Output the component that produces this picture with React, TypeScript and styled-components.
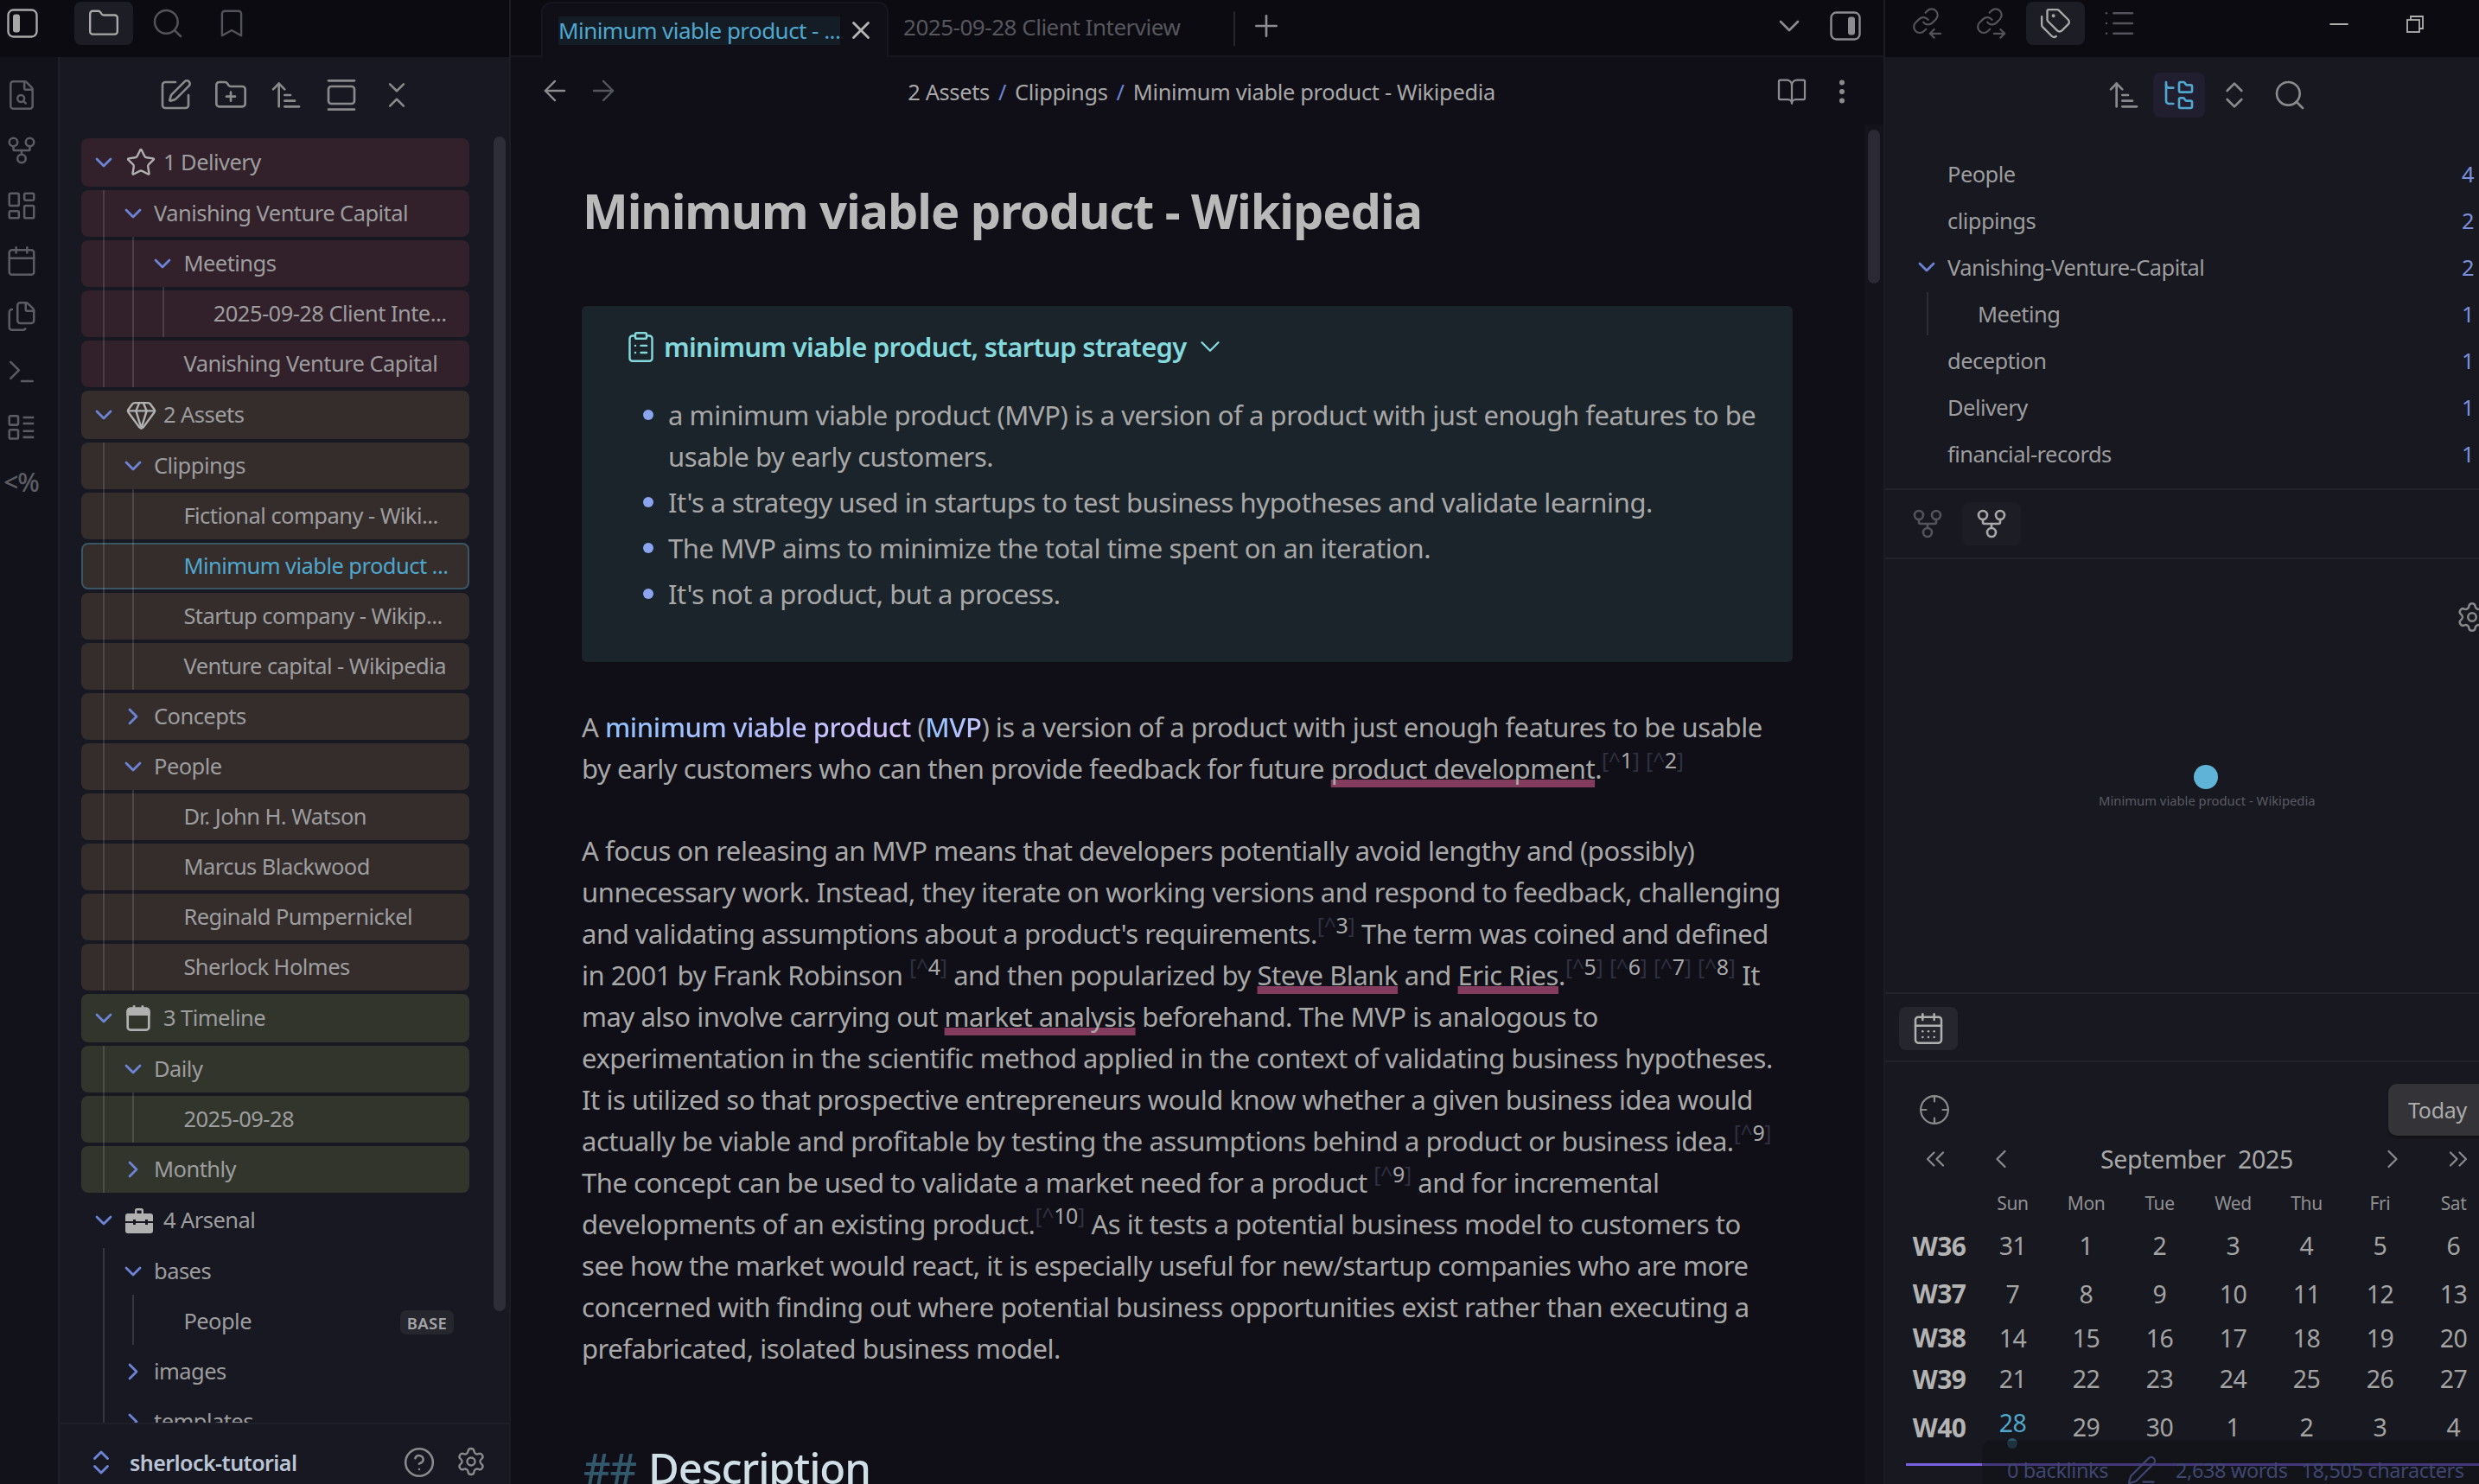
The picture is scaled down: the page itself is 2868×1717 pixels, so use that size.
import React from "react";
import styled, { createGlobalStyle } from "styled-components";
import {
  ArrowLeft,
  ArrowRight,
  ArrowUpNarrowWide,
  BookOpen,
  Bookmark,
  Calendar,
  CalendarDays,
  ChevronDown,
  ChevronLeft,
  ChevronRight,
  ChevronsDownUp,
  ChevronsLeft,
  ChevronsRight,
  ChevronsUpDown,
  CircleHelp,
  ClipboardList,
  Crosshair,
  EllipsisVertical,
  FileSearch,
  Files,
  Folder,
  FolderPlus,
  FolderTree,
  GalleryVertical,
  Gem,
  GitFork,
  LayoutDashboard,
  List,
  Minus,
  PenLine,
  Plus,
  Search,
  Settings,
  SquarePen,
  Star,
  Tags,
  Terminal,
  X,
} from "lucide-react";

const FONT = `"Noto Sans", "Open Sans", "Liberation Sans", sans-serif`;
const STROKE = 1.6;

const GlobalStyle = createGlobalStyle`
  html, body {
    margin: 0;
    padding: 0;
    background: #100f18;
    overflow: hidden;
  }
  * { box-sizing: border-box; }
  body { font-family: ${FONT}; }
`;

const Window = styled.div`
  width: 2868px;
  height: 1717px;
  display: grid;
  grid-template-columns: 591px 1590px 687px;
  overflow: hidden;
  position: relative;
  color: #a8a8a8;
`;

// left side
const LeftPane = styled.div`
  display: flex;
  flex-direction: column;
  height: 1717px;
  border-right: 2px solid #1c1c25;
  background: #181822;
`;

const TopBar = styled.div`
  height: 66px;
  flex: none;
  display: flex;
  align-items: center;
  background: #0c0b12;
`;

const LeftTopBar = styled(TopBar)`
  padding-left: 8px;
  align-items: flex-start;
  padding-top: 2px;
`;

const ToggleSlot = styled.div`
  width: 78px;
  height: 50px;
  display: flex;
  align-items: center;
  color: #a8a8a8;
`;

const TabIcon = styled.div<{ $active?: boolean; $width?: number }>`
  width: ${(p) => p.$width || 68}px;
  height: 50px;
  margin-right: 6px;
  border-radius: 8px;
  display: flex;
  align-items: center;
  justify-content: center;
  background: ${(p) => (p.$active ? "#1d1d25" : "transparent")};
  color: ${(p) => (p.$active ? "#a8a8a8" : "#53535b")};
`;

const LeftBody = styled.div`
  flex: 1;
  min-height: 0;
  display: flex;
`;

const Ribbon = styled.div`
  width: 69px;
  flex: none;
  border-right: 2px solid #1f1f29;
  background: #12121b;
  display: flex;
  flex-direction: column;
  align-items: center;
  padding: 25px 18px 0 0;
  gap: 26px;
  color: #5c5c65;
`;

const RibbonText = styled.div`
  font-size: 30px;
  font-weight: 500;
  line-height: 38px;
  letter-spacing: -1px;
`;

const TreePanel = styled.div`
  flex: 1;
  min-width: 0;
  display: flex;
  flex-direction: column;
  position: relative;
`;

const PaneToolbar = styled.div`
  height: 88px;
  flex: none;
  display: flex;
  justify-content: center;
  align-items: center;
  padding-left: 3px;
  color: #8a8a8d;
`;

const ToolButton = styled.div`
  width: 64px;
  height: 52px;
  display: flex;
  align-items: center;
  justify-content: center;
`;

const TreeList = styled.div`
  flex: 1;
  min-height: 0;
  overflow: hidden;
  display: flex;
  flex-direction: column;
  gap: 4px;
  padding: 6px 0 0 25px;
`;

const TONES: Record<string, string> = {
  red: "#32212a",
  brown: "#352d2c",
  green: "#32352c",
  none: "transparent",
};

const Row = styled.div<{ $tone: string; $top?: boolean; $active?: boolean; $level: number }>`
  position: relative;
  flex: none;
  width: 449px;
  height: ${(p) => (p.$top ? 56 : 54)}px;
  border-radius: 8px;
  background: ${(p) => TONES[p.$tone]};
  border: 2px solid ${(p) => (p.$active ? "#3b5564" : "transparent")};
  display: flex;
  align-items: center;
  padding-left: ${(p) => (p.$top ? 93 : 82 + 34.4 * (p.$level - 1))}px;
  padding-bottom: 2px;
  font-size: 25.5px;
  letter-spacing: -0.55px;
  white-space: nowrap;
  color: ${(p) => (p.$active ? "#4fa7cd" : "#9d9d9f")};
`;

const Guide = styled.span<{ $x: number; $first?: boolean }>`
  position: absolute;
  left: ${(p) => p.$x}px;
  top: ${(p) => (p.$first ? -2 : -6)}px;
  bottom: -2px;
  width: 2px;
  background: rgba(255, 255, 255, 0.13);
`;

const Caret = styled.span<{ $x: number }>`
  position: absolute;
  left: ${(p) => p.$x}px;
  top: 50%;
  transform: translateY(-50%);
  display: flex;
  color: #6d84d6;
`;

const RootIcon = styled.span`
  position: absolute;
  left: 49px;
  top: 50%;
  transform: translateY(-50%);
  display: flex;
  color: #b0b0b0;
`;

const BaseTag = styled.span`
  position: absolute;
  right: 16px;
  top: 12px;
  height: 28px;
  width: 62px;
  border-radius: 7px;
  background: #26262e;
  color: #a4a4a6;
  font-size: 18.5px;
  font-weight: 600;
  letter-spacing: 0.4px;
  display: flex;
  align-items: center;
  justify-content: center;
`;

const TreeScroll = styled.div`
  position: absolute;
  left: 502px;
  top: 92px;
  width: 14px;
  height: 1359px;
  border-radius: 7px;
  background: #2e2e39;
`;

const TreeFooter = styled.div`
  height: 71px;
  flex: none;
  display: flex;
  align-items: center;
  border-top: 2px solid #1f1f29;
  background: #181822;
  padding: 18px 0 0 30px;
  color: #8a8a8d;
`;

const VaultCaret = styled.span`
  display: flex;
  color: #6d84d6;
  width: 51px;
`;

const VaultName = styled.div`
  flex: 1;
  font-size: 25px;
  font-weight: 600;
  letter-spacing: -0.55px;
  color: #bac4d4;
`;

const FooterButton = styled.div`
  width: 60px;
  display: flex;
  justify-content: center;
`;

const FooterEnd = styled.div`
  display: flex;
  padding-right: 14px;
`;

// center
const CenterPane = styled.div`
  display: flex;
  flex-direction: column;
  height: 1717px;
  position: relative;
  background: #100f18;
  border-right: 2px solid #1c1c25;
  overflow: hidden;
`;

const TabStrip = styled(TopBar)`
  position: relative;
  border-bottom: 2px solid #15161e;
`;

const ActiveTab = styled.div`
  position: absolute;
  left: 35px;
  top: 2px;
  width: 402px;
  height: 64px;
  background: #100f18;
  border-radius: 12px 12px 0 0;
  border: 2px solid #15161e;
  border-bottom: none;
  display: flex;
  align-items: center;
  padding-left: 18px;
  color: #b4b4b4;
`;

const ActiveTitle = styled.div`
  width: 326px;
  height: 33px;
  background: #141c25;
  color: #4fa7cd;
  font-size: 26px;
  line-height: 32px;
  letter-spacing: -0.55px;
  white-space: nowrap;
  margin-right: 7px;
`;

const IdleTab = styled.div`
  position: absolute;
  left: 454px;
  top: 13px;
  font-size: 26px;
  line-height: 36px;
  letter-spacing: -0.48px;
  color: #56565d;
  white-space: nowrap;
`;

const TabDivider = styled.div`
  position: absolute;
  left: 836px;
  top: 13px;
  width: 2px;
  height: 40px;
  background: #26262c;
`;

const TabEnd = styled.div<{ $x: number }>`
  position: absolute;
  left: ${(p) => p.$x}px;
  top: 12px;
  height: 36px;
  display: flex;
  align-items: center;
  color: #8c8c90;
`;

const ViewHeader = styled.div`
  height: 80px;
  flex: none;
  position: relative;
  display: flex;
  align-items: center;
  justify-content: center;
`;

const NavArrows = styled.div`
  position: absolute;
  left: 32px;
  top: 20px;
  display: flex;
  gap: 18px;
  color: #8c8c90;
`;

const NavForward = styled.span`
  display: flex;
  color: #55555c;
`;

const Crumbs = styled.div`
  font-size: 25.4px;
  letter-spacing: -0.32px;
  color: #a8a8a8;
  white-space: nowrap;
  display: flex;
  gap: 10px;
  margin-left: 10px;
`;

const CrumbSlash = styled.span`
  color: #6d84d6;
`;

const ViewActions = styled.div`
  position: absolute;
  left: 1464px;
  top: 22px;
  display: flex;
  gap: 22px;
  color: #8c8c90;
`;

const Content = styled.div`
  flex: 1;
  min-height: 0;
  overflow: hidden;
  padding: 0 0 0 82px;
`;

const Title = styled.h1`
  margin: 62px 0 76px 1px;
  font-size: 56px;
  line-height: 70px;
  font-weight: 700;
  letter-spacing: -1.1px;
  color: #b9b9b9;
  white-space: nowrap;
`;

const CalloutBox = styled.div`
  width: 1401px;
  height: 412px;
  background: #1c242b;
  border-radius: 6px;
  padding: 23px 0 0 49px;
`;

const CalloutTitle = styled.div`
  display: flex;
  align-items: center;
  height: 48px;
  color: #83d9dc;
  font-size: 31px;
  font-weight: 600;
  letter-spacing: -0.72px;
  white-space: nowrap;
  margin-bottom: 31px;
`;

const CalloutIcon = styled.span`
  display: flex;
  margin-right: 7px;
`;

const CalloutCaret = styled.span`
  display: flex;
  margin-left: 8px;
`;

const Bullets = styled.ul`
  list-style: none;
  margin: 0;
  padding: 0;
  display: flex;
  flex-direction: column;
  gap: 5px;
`;

const Bullet = styled.li`
  position: relative;
  padding-left: 51px;
  font-size: 31px;
  line-height: 48px;
  letter-spacing: -0.42px;
  white-space: nowrap;

  &::before {
    content: "";
    position: absolute;
    left: 22px;
    top: 18px;
    width: 12px;
    height: 12px;
    border-radius: 50%;
    background: #8aa4f0;
  }
`;

const Para = styled.p`
  margin: 51px 0 47px;
  font-size: 31px;
  line-height: 48px;
  letter-spacing: -0.46px;
  white-space: nowrap;

  & + & {
    margin-top: 0;
  }
`;

const GradientLink = styled.span`
  background: linear-gradient(90deg, #8dc0ff, #d8c2ff);
  -webkit-background-clip: text;
  background-clip: text;
  color: transparent;
  font-weight: 500;
`;

const PlainGradient = styled(GradientLink)`
  background: linear-gradient(90deg, #8dc0ff, #c6c6ff);
  -webkit-background-clip: text;
  background-clip: text;
`;

const WikiLink = styled.span`
  text-decoration: underline #833c5e 9px;
  text-underline-offset: 1px;
  text-decoration-skip-ink: none;
`;

const NoteMark = styled.sup`
  font-size: 25px;
  line-height: 0;
  letter-spacing: -0.4px;
  vertical-align: 12px;
  color: #a8a8a8;
`;

const NoteFaint = styled.span`
  color: #2f3040;
`;

const Heading = styled.h2`
  margin: 79px 0 0 2px;
  font-size: 49px;
  line-height: 70px;
  font-weight: 500;
  letter-spacing: -1.1px;
  color: #d0dfe6;
  white-space: nowrap;
`;

const HeadingHash = styled.span`
  color: #31596b;
  margin-right: 14px;
`;

const ScrollTrack = styled.div`
  position: absolute;
  right: 0;
  top: 144px;
  bottom: 0;
  width: 22px;
  background: #14131c;
`;

const ScrollThumb = styled.div`
  position: absolute;
  left: 4px;
  top: 6px;
  width: 14px;
  height: 178px;
  border-radius: 7px;
  background: #2b2a34;
`;

// right side
const RightPane = styled.div`
  height: 1717px;
  display: flex;
  flex-direction: column;
  background: #181820;
  overflow: hidden;
  position: relative;
`;

const RightTopBar = styled(TopBar)`
  align-items: flex-start;
  padding: 2px 0 0 15px;
  position: relative;
`;

const WindowButton = styled.div<{ $x: number }>`
  position: absolute;
  left: ${(p) => p.$x}px;
  top: 15px;
  height: 26px;
  display: flex;
  align-items: center;
  color: #b0b0b0;
`;

const TagRows = styled.div`
  height: 413px;
  flex: none;
  padding-top: 20px;
  border-bottom: 2px solid #22222b;
`;

const RightToolbar = styled(PaneToolbar)`
  padding-left: 56px;
`;

const SmallTool = styled.div<{ $active?: boolean }>`
  width: 60px;
  height: 52px;
  margin: 0 2px;
  border-radius: 8px;
  display: flex;
  align-items: center;
  justify-content: center;
  background: ${(p) => (p.$active ? "#211e30" : "transparent")};
  color: ${(p) => (p.$active ? "#4fa7cd" : "#8a8a8d")};
`;

const TagRow = styled.div<{ $nested?: boolean }>`
  position: relative;
  height: 54px;
  display: flex;
  align-items: center;
  padding-left: ${(p) => (p.$nested ? 107 : 72)}px;
  padding-right: 6px;
  font-size: 25.5px;
  letter-spacing: -0.55px;
  color: #9d9d9f;
`;

const TagName = styled.span`
  flex: 1;
  white-space: nowrap;
`;

const TagCount = styled.span`
  color: #7a90dc;
`;

const TagCaret = styled.span`
  position: absolute;
  left: 32px;
  top: 11px;
  display: flex;
  color: #6d84d6;
`;

const TagGuide = styled.span`
  position: absolute;
  left: 48px;
  top: 2px;
  bottom: 2px;
  width: 2px;
  background: #2c2c35;
`;

const GraphHeader = styled.div`
  height: 80px;
  flex: none;
  padding: 14px 0 0 15px;
  display: flex;
  border-bottom: 2px solid #22222b;
`;

const GraphPane = styled.div`
  height: 503px;
  flex: none;
  position: relative;
  border-bottom: 2px solid #22222b;
`;

const GraphNode = styled.div`
  position: absolute;
  left: 357px;
  top: 238px;
  width: 28px;
  height: 28px;
  border-radius: 50%;
  background: #5fb3d6;
`;

const GraphLabel = styled.div`
  position: absolute;
  left: 247px;
  top: 267px;
  width: 249px;
  text-align: center;
  font-size: 14.8px;
  line-height: 24px;
  white-space: nowrap;
  color: #5b5b63;
`;

const GraphGear = styled.div`
  position: absolute;
  left: 660px;
  top: 48px;
  display: flex;
  color: #88888b;
`;

const CalendarHeader = styled.div`
  height: 79px;
  flex: none;
  padding: 15px 0 0 16px;
  border-bottom: 2px solid #22222b;
`;

const CalendarTab = styled.div`
  width: 68px;
  height: 50px;
  border-radius: 8px;
  background: #26262e;
  display: flex;
  align-items: center;
  justify-content: center;
  color: #b0b0b0;
`;

const CalendarBody = styled.div`
  padding: 25px 0 0 20px;
  width: 701px;
`;

const CalendarTools = styled.div`
  height: 60px;
  display: flex;
  align-items: center;
  justify-content: space-between;
  padding-left: 18px;
  color: #8a8a8d;
`;

const TodayButton = styled.div`
  width: 119px;
  height: 60px;
  border-radius: 10px 0 0 10px;
  background: #333338;
  box-shadow: 0 2px 3px rgba(0, 0, 0, 0.4);
  color: #aaaaaa;
  font-size: 25px;
  letter-spacing: -0.3px;
  line-height: 60px;
  padding-left: 23px;
`;

const MonthNav = styled.div`
  height: 54px;
  width: 681px;
  display: grid;
  grid-template-columns: 76px 76px 1fr 76px 76px;
  align-items: center;
  justify-items: center;
  color: #8a8a8d;
`;

const MonthTitle = styled.div`
  font-size: 28.5px;
  letter-spacing: -0.3px;
  color: #a8a8a8;
  white-space: pre;
`;

const WeekGrid = styled.div<{ $height: number }>`
  height: ${(p) => p.$height}px;
  width: 680px;
  display: grid;
  grid-template-columns: repeat(8, 85px);
  align-items: center;
  justify-items: center;
`;

const DayName = styled.div`
  font-size: 21px;
  letter-spacing: -0.4px;
  color: #8f8f92;
`;

const WeekLabel = styled.div`
  font-size: 30px;
  font-weight: 700;
  letter-spacing: -0.6px;
  color: #b3b3b3;
`;

const DayCell = styled.div<{ $today?: boolean }>`
  position: relative;
  font-size: 28.5px;
  letter-spacing: -0.5px;
  color: ${(p) => (p.$today ? "#4fa7cd" : "#a3a3a3")};
  transform: translateY(${(p) => (p.$today ? -5 : 0)}px);
`;

const DayDot = styled.span`
  position: absolute;
  left: 50%;
  top: 37px;
  width: 12px;
  height: 12px;
  margin-left: -6px;
  border-radius: 50%;
  background: #2f556b;
`;

const StatusBar = styled.div`
  position: absolute;
  right: 0;
  bottom: 0;
  width: 575px;
  height: 50px;
  background: rgba(14, 13, 20, 0.5);
  border-radius: 10px 0 0 0;
  display: flex;
  align-items: center;
  padding: 18px 0 0 29px;
  font-size: 23.5px;
  letter-spacing: -0.4px;
  white-space: nowrap;
  color: #3f4670;
`;

const StatusIcon = styled.span`
  display: flex;
  margin: 0 21px;
`;

const StatusGap = styled.span`
  width: 16px;
`;

const ProgressLine = styled.div`
  position: absolute;
  left: 24px;
  right: 0;
  top: 1693px;
  height: 3px;
  background: #7a5fe0;
`;

// small drawings
const SidebarToggle = ({ right }: { right?: boolean }) => (
  <svg width="36" height="34" viewBox="0 0 36 34" fill="none">
    <rect x="1.5" y="1.5" width="33" height="31" rx="6" stroke="currentColor" strokeWidth="2.4" />
    <rect x={right ? 21 : 7} y="6.5" width="8" height="21" rx="3" fill="currentColor" />
  </svg>
);

const TaskBoard = () => (
  <svg width="38" height="38" viewBox="0 0 24 24" fill="none" stroke="currentColor" strokeWidth={STROKE}>
    <rect x="3" y="4" width="6.5" height="6.5" rx="1" />
    <rect x="3" y="14" width="6.5" height="6.5" rx="1" />
    <path d="M13 5h8M13 9.5h8M13 15h8M13 19.5h8" />
  </svg>
);

const SolidCalendar = () => (
  <svg width="30" height="32" viewBox="0 0 24 26" fill="none" stroke="currentColor" strokeWidth="2.2">
    <rect x="2" y="4" width="20" height="20" rx="2.5" />
    <path d="M2 9.5V7a3 3 0 0 1 3-3h14a3 3 0 0 1 3 3v2.5z" fill="currentColor" />
    <path d="M8 1v4M16 1v4" />
  </svg>
);

const Toolbox = () => (
  <svg width="32" height="32" viewBox="0 0 32 32" fill="currentColor">
    <path d="M11 8V4.5A2.5 2.5 0 0 1 13.5 2h5A2.5 2.5 0 0 1 21 4.5V8h-2.4V4.6h-5.2V8z" />
    <path d="M3 8h26a3 3 0 0 1 3 3v6h-6v-2h-3v2H12v-2H9v2H0v-6a3 3 0 0 1 3-3z" />
    <path d="M0 19h9v2h3v-2h11v2h3v-2h6v9a3 3 0 0 1-3 3H3a3 3 0 0 1-3-3z" />
  </svg>
);

const Restore = () => (
  <svg width="20" height="20" viewBox="0 0 20 20" fill="none" stroke="currentColor" strokeWidth="1.8">
    <rect x="1" y="5" width="14" height="14" />
    <path d="M5 5V1h14v14h-4" />
  </svg>
);

const LinkIn = ({ out }: { out?: boolean }) => (
  <svg width="36" height="36" viewBox="0 0 26 26" fill="none" stroke="currentColor" strokeWidth={STROKE} strokeLinecap="round" strokeLinejoin="round">
    <path d="M9.5 12a5 5 0 0 0 7.54.54l3-3a5 5 0 0 0-7.07-7.07l-1.72 1.71" />
    <path d="M13.5 10a5 5 0 0 0-7.54-.54l-3 3a5 5 0 0 0 7.07 7.07l1.71-1.71" />
    {out ? <path d="M15 21.5h9M20.5 18l3.5 3.5-3.5 3.5" /> : <path d="M15 21.5h9M18.5 18l-3.5 3.5 3.5 3.5" />}
  </svg>
);

const Note = ({ n }: { n: string }) => (
  <NoteMark>
    <NoteFaint>[^</NoteFaint>
    {n}
    <NoteFaint>]</NoteFaint>
  </NoteMark>
);

type TreeItem = {
  label: string;
  level: number;
  tone: string;
  open?: boolean;
  icon?: React.ReactNode;
  guides?: number[];
  first?: boolean;
  active?: boolean;
  tag?: string;
};

const GUIDE_X = [23, 57, 92];

const treeItems: TreeItem[] = [
  { label: "1 Delivery", level: 0, tone: "red", open: true, icon: <Star size={36} strokeWidth={STROKE} /> },
  { label: "Vanishing Venture Capital", level: 1, tone: "red", open: true, guides: [0], first: true },
  { label: "Meetings", level: 2, tone: "red", open: true, guides: [0, 1] },
  { label: "2025-09-28 Client Inte...", level: 3, tone: "red", guides: [0, 1, 2] },
  { label: "Vanishing Venture Capital", level: 2, tone: "red", guides: [0, 1] },
  { label: "2 Assets", level: 0, tone: "brown", open: true, icon: <Gem size={37} strokeWidth={STROKE} /> },
  { label: "Clippings", level: 1, tone: "brown", open: true, guides: [0], first: true },
  { label: "Fictional company - Wiki...", level: 2, tone: "brown", guides: [0, 1] },
  { label: "Minimum viable product ...", level: 2, tone: "brown", guides: [0, 1], active: true },
  { label: "Startup company - Wikip...", level: 2, tone: "brown", guides: [0, 1] },
  { label: "Venture capital - Wikipedia", level: 2, tone: "brown", guides: [0, 1] },
  { label: "Concepts", level: 1, tone: "brown", open: false, guides: [0] },
  { label: "People", level: 1, tone: "brown", open: true, guides: [0] },
  { label: "Dr. John H. Watson", level: 2, tone: "brown", guides: [0, 1] },
  { label: "Marcus Blackwood", level: 2, tone: "brown", guides: [0, 1] },
  { label: "Reginald Pumpernickel", level: 2, tone: "brown", guides: [0, 1] },
  { label: "Sherlock Holmes", level: 2, tone: "brown", guides: [0, 1] },
  { label: "3 Timeline", level: 0, tone: "green", open: true, icon: <SolidCalendar /> },
  { label: "Daily", level: 1, tone: "green", open: true, guides: [0], first: true },
  { label: "2025-09-28", level: 2, tone: "green", guides: [0, 1] },
  { label: "Monthly", level: 1, tone: "green", open: false, guides: [0] },
  { label: "4 Arsenal", level: 0, tone: "none", open: true, icon: <Toolbox /> },
  { label: "bases", level: 1, tone: "none", open: true, guides: [0], first: true },
  { label: "People", level: 2, tone: "none", guides: [0, 1], tag: "BASE" },
  { label: "images", level: 1, tone: "none", open: false, guides: [0] },
  { label: "templates", level: 1, tone: "none", open: false, guides: [0] },
];

const tagItems = [
  { name: "People", count: 4 },
  { name: "clippings", count: 2 },
  { name: "Vanishing-Venture-Capital", count: 2, open: true },
  { name: "Meeting", count: 1, nested: true },
  { name: "deception", count: 1 },
  { name: "Delivery", count: 1 },
  { name: "financial-records", count: 1 },
];

const weeks = [
  { label: "W36", height: 50, days: ["31", "1", "2", "3", "4", "5", "6"] },
  { label: "W37", height: 61, days: ["7", "8", "9", "10", "11", "12", "13"] },
  { label: "W38", height: 35, days: ["14", "15", "16", "17", "18", "19", "20"] },
  { label: "W39", height: 66, days: ["21", "22", "23", "24", "25", "26", "27"] },
  { label: "W40", height: 46, days: ["28", "29", "30", "1", "2", "3", "4"] },
];

const dayNames = ["Sun", "Mon", "Tue", "Wed", "Thu", "Fri", "Sat"];

const TreeRow = ({ item }: { item: TreeItem }) => {
  const isTop = item.level === 0;
  const caretX = isTop ? 8 : 42 + 34.4 * (item.level - 1);
  return (
    <Row $tone={item.tone} $top={isTop} $level={item.level} $active={item.active}>
      {item.guides?.map((g) => (
        <Guide key={g} $x={GUIDE_X[g]} $first={item.first && g === item.guides!.length - 1} />
      ))}
      {item.open !== undefined && (
        <Caret $x={caretX}>
          {item.open ? <ChevronDown size={32} strokeWidth={2.1} /> : <ChevronRight size={32} strokeWidth={2.1} />}
        </Caret>
      )}
      {item.icon && <RootIcon>{item.icon}</RootIcon>}
      {item.label}
      {item.tag && <BaseTag>{item.tag}</BaseTag>}
    </Row>
  );
};

const App = () => {
  return (
    <Window>
      <GlobalStyle />
      <LeftPane>
        <LeftTopBar>
          <ToggleSlot>
            <SidebarToggle />
          </ToggleSlot>
          <TabIcon $active>
            <Folder size={38} strokeWidth={1.5} />
          </TabIcon>
          <TabIcon>
            <Search size={40} strokeWidth={1.5} />
          </TabIcon>
          <TabIcon>
            <Bookmark size={38} strokeWidth={1.5} />
          </TabIcon>
        </LeftTopBar>
        <LeftBody>
          <Ribbon>
            <FileSearch size={38} strokeWidth={STROKE} />
            <GitFork size={38} strokeWidth={STROKE} />
            <LayoutDashboard size={38} strokeWidth={STROKE} />
            <Calendar size={38} strokeWidth={STROKE} />
            <Files size={38} strokeWidth={STROKE} />
            <Terminal size={38} strokeWidth={STROKE} />
            <TaskBoard />
            <RibbonText>&lt;%</RibbonText>
          </Ribbon>
          <TreePanel>
            <PaneToolbar>
              <ToolButton>
                <SquarePen size={40} strokeWidth={STROKE} />
              </ToolButton>
              <ToolButton>
                <FolderPlus size={40} strokeWidth={STROKE} />
              </ToolButton>
              <ToolButton>
                <ArrowUpNarrowWide size={40} strokeWidth={STROKE} />
              </ToolButton>
              <ToolButton>
                <GalleryVertical size={40} strokeWidth={STROKE} />
              </ToolButton>
              <ToolButton>
                <ChevronsDownUp size={38} strokeWidth={STROKE} />
              </ToolButton>
            </PaneToolbar>
            <TreeList>
              {treeItems.map((item, i) => (
                <TreeRow key={i} item={item} />
              ))}
            </TreeList>
            <TreeScroll />
            <TreeFooter>
              <VaultCaret>
                <ChevronsUpDown size={36} strokeWidth={1.9} />
              </VaultCaret>
              <VaultName>sherlock-tutorial</VaultName>
              <FooterEnd>
                <FooterButton>
                  <CircleHelp size={38} strokeWidth={STROKE} />
                </FooterButton>
                <FooterButton>
                  <Settings size={36} strokeWidth={STROKE} />
                </FooterButton>
              </FooterEnd>
            </TreeFooter>
          </TreePanel>
        </LeftBody>
      </LeftPane>

      <CenterPane>
        <TabStrip>
          <ActiveTab>
            <ActiveTitle>Minimum viable product - ...</ActiveTitle>
            <X size={34} strokeWidth={2} />
          </ActiveTab>
          <IdleTab>2025-09-28 Client Interview</IdleTab>
          <TabDivider />
          <TabEnd $x={854}>
            <Plus size={40} strokeWidth={1.6} />
          </TabEnd>
          <TabEnd $x={1459}>
            <ChevronDown size={40} strokeWidth={1.6} />
          </TabEnd>
          <TabEnd $x={1526}>
            <SidebarToggle right />
          </TabEnd>
        </TabStrip>
        <ViewHeader>
          <NavArrows>
            <ArrowLeft size={38} strokeWidth={1.5} />
            <NavForward>
              <ArrowRight size={38} strokeWidth={1.5} />
            </NavForward>
          </NavArrows>
          <Crumbs>
            <span>2 Assets</span>
            <CrumbSlash>/</CrumbSlash>
            <span>Clippings</span>
            <CrumbSlash>/</CrumbSlash>
            <span>Minimum viable product - Wikipedia</span>
          </Crumbs>
          <ViewActions>
            <BookOpen size={36} strokeWidth={1.5} />
            <EllipsisVertical size={36} strokeWidth={2} />
          </ViewActions>
        </ViewHeader>
        <Content>
          <Title>Minimum viable product - Wikipedia</Title>
          <CalloutBox>
            <CalloutTitle>
              <CalloutIcon>
                <ClipboardList size={39} strokeWidth={1.5} />
              </CalloutIcon>
              minimum viable product, startup strategy
              <CalloutCaret>
                <ChevronDown size={38} strokeWidth={1.5} />
              </CalloutCaret>
            </CalloutTitle>
            <Bullets>
              <Bullet>
                a minimum viable product (MVP) is a version of a product with just enough features to be
                <br />
                usable by early customers.
              </Bullet>
              <Bullet>It's a strategy used in startups to test business hypotheses and validate learning.</Bullet>
              <Bullet>The MVP aims to minimize the total time spent on an iteration.</Bullet>
              <Bullet>It's not a product, but a process.</Bullet>
            </Bullets>
          </CalloutBox>
          <Para>
            A <GradientLink>minimum viable product</GradientLink> (<PlainGradient>MVP</PlainGradient>) is a version of a product with just enough features to be usable
            <br />
            by early customers who can then provide feedback for future <WikiLink>product development</WikiLink>.<Note n="1" /> <Note n="2" />
          </Para>
          <Para>
            A focus on releasing an MVP means that developers potentially avoid lengthy and (possibly)
            <br />
            unnecessary work. Instead, they iterate on working versions and respond to feedback, challenging
            <br />
            and validating assumptions about a product's requirements.<Note n="3" /> The term was coined and defined
            <br />
            in 2001 by Frank Robinson <Note n="4" /> and then popularized by <WikiLink>Steve Blank</WikiLink> and <WikiLink>Eric Ries</WikiLink>.<Note n="5" /> <Note n="6" /> <Note n="7" /> <Note n="8" /> It
            <br />
            may also involve carrying out <WikiLink>market analysis</WikiLink> beforehand. The MVP is analogous to
            <br />
            experimentation in the scientific method applied in the context of validating business hypotheses.
            <br />
            It is utilized so that prospective entrepreneurs would know whether a given business idea would
            <br />
            actually be viable and profitable by testing the assumptions behind a product or business idea.<Note n="9" />
            <br />
            The concept can be used to validate a market need for a product <Note n="9" /> and for incremental
            <br />
            developments of an existing product.<Note n="10" /> As it tests a potential business model to customers to
            <br />
            see how the market would react, it is especially useful for new/startup companies who are more
            <br />
            concerned with finding out where potential business opportunities exist rather than executing a
            <br />
            prefabricated, isolated business model.
          </Para>
          <Heading>
            <HeadingHash>##</HeadingHash>Description
          </Heading>
        </Content>
        <ScrollTrack>
          <ScrollThumb />
        </ScrollTrack>
      </CenterPane>

      <RightPane>
        <RightTopBar>
          <TabIcon $width={68}>
            <LinkIn />
          </TabIcon>
          <TabIcon $width={68}>
            <LinkIn out />
          </TabIcon>
          <TabIcon $width={68} $active>
            <Tags size={38} strokeWidth={1.5} />
          </TabIcon>
          <TabIcon $width={68}>
            <List size={40} strokeWidth={1.5} />
          </TabIcon>
          <WindowButton $x={508}>
            <Minus size={34} strokeWidth={1.3} />
          </WindowButton>
          <WindowButton $x={603}>
            <Restore />
          </WindowButton>
        </RightTopBar>
        <RightToolbar>
          <SmallTool>
            <ArrowUpNarrowWide size={40} strokeWidth={STROKE} />
          </SmallTool>
          <SmallTool $active>
            <FolderTree size={40} strokeWidth={STROKE} />
          </SmallTool>
          <SmallTool>
            <ChevronsUpDown size={40} strokeWidth={STROKE} />
          </SmallTool>
          <SmallTool>
            <Search size={40} strokeWidth={STROKE} />
          </SmallTool>
        </RightToolbar>
        <TagRows>
          {tagItems.map((t) => (
            <TagRow key={t.name} $nested={t.nested}>
              {t.open && (
                <TagCaret>
                  <ChevronDown size={32} strokeWidth={2.1} />
                </TagCaret>
              )}
              {t.nested && <TagGuide />}
              <TagName>{t.name}</TagName>
              <TagCount>{t.count}</TagCount>
            </TagRow>
          ))}
        </TagRows>
        <GraphHeader>
          <TabIcon $width={68}>
            <GitFork size={40} strokeWidth={STROKE} />
          </TabIcon>
          <TabIcon $width={68} $active>
            <GitFork size={40} strokeWidth={STROKE} />
          </TabIcon>
        </GraphHeader>
        <GraphPane>
          <GraphNode />
          <GraphLabel>Minimum viable product - Wikipedia</GraphLabel>
          <GraphGear>
            <Settings size={38} strokeWidth={STROKE} />
          </GraphGear>
        </GraphPane>
        <CalendarHeader>
          <CalendarTab>
            <CalendarDays size={40} strokeWidth={1.5} />
          </CalendarTab>
        </CalendarHeader>
        <CalendarBody>
          <CalendarTools>
            <Crosshair size={38} strokeWidth={1.4} />
            <TodayButton>Today</TodayButton>
          </CalendarTools>
          <MonthNav>
            <ChevronsLeft size={36} strokeWidth={1.5} />
            <ChevronLeft size={36} strokeWidth={1.5} />
            <MonthTitle>September  2025</MonthTitle>
            <ChevronRight size={36} strokeWidth={1.5} />
            <ChevronsRight size={36} strokeWidth={1.5} />
          </MonthNav>
          <WeekGrid $height={48}>
            <span />
            {dayNames.map((d) => (
              <DayName key={d}>{d}</DayName>
            ))}
          </WeekGrid>
          {weeks.map((w) => (
            <WeekGrid key={w.label} $height={w.height}>
              <WeekLabel>{w.label}</WeekLabel>
              {w.days.map((d, i) => {
                const today = w.label === "W40" && i === 0;
                return (
                  <DayCell key={i} $today={today}>
                    {d}
                    {today && <DayDot />}
                  </DayCell>
                );
              })}
            </WeekGrid>
          ))}
        </CalendarBody>
        <ProgressLine />
        <StatusBar>
          0 backlinks
          <StatusIcon>
            <PenLine size={36} strokeWidth={1.5} />
          </StatusIcon>
          2,638 words
          <StatusGap />
          18,505 characters
        </StatusBar>
      </RightPane>
    </Window>
  );
};

export default App;
